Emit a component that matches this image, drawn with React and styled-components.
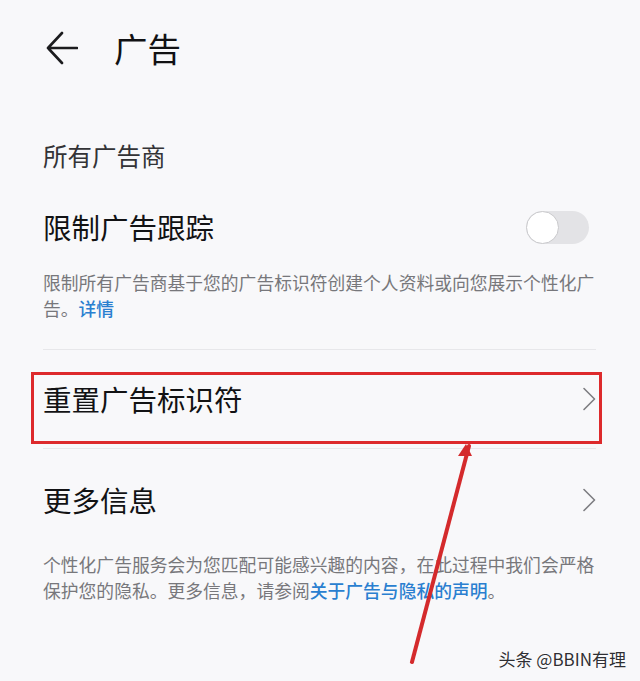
import React, { useState } from "react";
import styled, { createGlobalStyle } from "styled-components";

const GlobalStyle = createGlobalStyle`
  html, body {
    margin: 0;
    padding: 0;
    background: #f8f8fa;
  }
  * {
    box-sizing: border-box;
  }
`;

const Page = styled.div`
  position: relative;
  width: 640px;
  height: 681px;
  overflow: hidden;
  background: #f8f8fa;
  font-family: "Noto Sans CJK SC", "Noto Sans", sans-serif;
  color: #1c1c1e;
`;

const Header = styled.header`
  display: flex;
  align-items: center;
  height: 50px;
  margin-top: 23px;
  padding-left: 46px;
  gap: 36px;
`;

const BackButton = styled.button`
  display: flex;
  align-items: center;
  justify-content: center;
  padding: 0;
  border: none;
  background: none;
  width: 32px;
  height: 34px;
  color: #1c1c1e;
  cursor: pointer;
`;

const Title = styled.h1`
  margin: 0;
  font-size: 33.5px;
  font-weight: 400;
  line-height: 1;
  color: #111113;
`;

const Content = styled.main`
  padding: 0 44px 0 43px;
`;

const SectionLabel = styled.div`
  margin-top: 68px;
  font-size: 24.5px;
  line-height: 30px;
  color: #333336;
`;

const Row = styled.div`
  position: relative;
  display: flex;
  align-items: center;
  justify-content: space-between;
  height: ${(p) => p.$height}px;
  margin-top: ${(p) => p.$top || 0}px;
`;

const RowLabel = styled.span`
  font-size: 28.5px;
  font-weight: 400;
  line-height: 1;
  color: #121214;
`;

const Track = styled.button`
  position: relative;
  display: flex;
  align-items: center;
  width: 63px;
  height: 33px;
  margin-right: 7px;
  padding: 0;
  border: none;
  border-radius: 17px;
  background: ${(p) => (p.$on ? "#2a82d6" : "#e3e3e6")};
  justify-content: ${(p) => (p.$on ? "flex-end" : "flex-start")};
  cursor: pointer;
`;

const Knob = styled.span`
  width: 33px;
  height: 33px;
  border-radius: 50%;
  background: #ffffff;
  border: 1.5px solid #c9c9cc;
`;

const Description = styled.p`
  margin: ${(p) => p.$top}px 0 0;
  font-size: 17.8px;
  line-height: 26px;
  color: #77777b;
  letter-spacing: 0;
`;

const Link = styled.a`
  color: #2a7fd0;
  font-weight: 500;
  text-decoration: none;
`;

const Divider = styled.hr`
  margin: 0;
  border: none;
  border-top: 1px solid #e7e7ea;
`;

const Highlight = styled.div`
  position: absolute;
  top: 22px;
  bottom: 4px;
  left: -12px;
  right: -6px;
  border: 3px solid #dd2a2c;
  pointer-events: none;
`;

const Pointer = styled.svg`
  position: absolute;
  left: 400px;
  top: 440px;
  pointer-events: none;
`;

const Watermark = styled.div`
  position: absolute;
  right: 14px;
  bottom: 12px;
  font-family: "Noto Sans CJK SC", "Liberation Sans", sans-serif;
  font-size: 17px;
  line-height: 20px;
  color: #2f2f33;
  text-shadow: 0 0 2px #ffffff, 0 0 2px #ffffff;
`;

const BackArrow = () => (
  <svg width="32" height="34" viewBox="0 0 32 34" fill="none">
    <path
      d="M31 17H2M16 2L2 17L16 32"
      stroke="currentColor"
      strokeWidth="2.6"
      strokeLinecap="round"
      strokeLinejoin="round"
    />
  </svg>
);

const Chevron = () => (
  <svg width="14" height="24" viewBox="0 0 14 24" fill="none">
    <path
      d="M2 1.5L12.5 12L2 22.5"
      stroke="#7d7d82"
      strokeWidth="1.6"
      strokeLinecap="round"
      strokeLinejoin="round"
    />
  </svg>
);

const Toggle = () => {
  const [on, setOn] = useState(false);
  return (
    <Track $on={on} onClick={() => setOn(!on)} aria-pressed={on}>
      <Knob />
    </Track>
  );
};

const App = () => {
  return (
    <Page>
      <GlobalStyle />
      <Header>
        <BackButton aria-label="返回">
          <BackArrow />
        </BackButton>
        <Title>广告</Title>
      </Header>

      <Content>
        <SectionLabel>所有广告商</SectionLabel>

        <Row $height={56} $top={28}>
          <RowLabel>限制广告跟踪</RowLabel>
          <Toggle />
        </Row>
        <Description $top={14}>
          限制所有广告商基于您的广告标识符创建个人资料或向您展示个性化广告。<Link href="#">详情</Link>
        </Description>

        <Divider style={{ marginTop: 28 }} />

        <Row $height={98}>
          <RowLabel>重置广告标识符</RowLabel>
          <Chevron />
          <Highlight />
        </Row>
        <Divider />

        <Row $height={102}>
          <RowLabel>更多信息</RowLabel>
          <Chevron />
        </Row>
        <Description $top={0}>
          个性化广告服务会为您匹配可能感兴趣的内容，在此过程中我们会严格保护您的隐私。更多信息，请参阅
          <Link href="#">关于广告与隐私的声明</Link>。
        </Description>
      </Content>

      <Pointer width="80" height="230" viewBox="0 0 80 230">
        <path d="M69 6L12 222" stroke="#d42a2c" strokeWidth="4" strokeLinecap="round" />
        <path d="M66 4L58 16L72 16Z" fill="#d42a2c" />
      </Pointer>

      <Watermark>头条 @BBIN有理</Watermark>
    </Page>
  );
};

export default App;
